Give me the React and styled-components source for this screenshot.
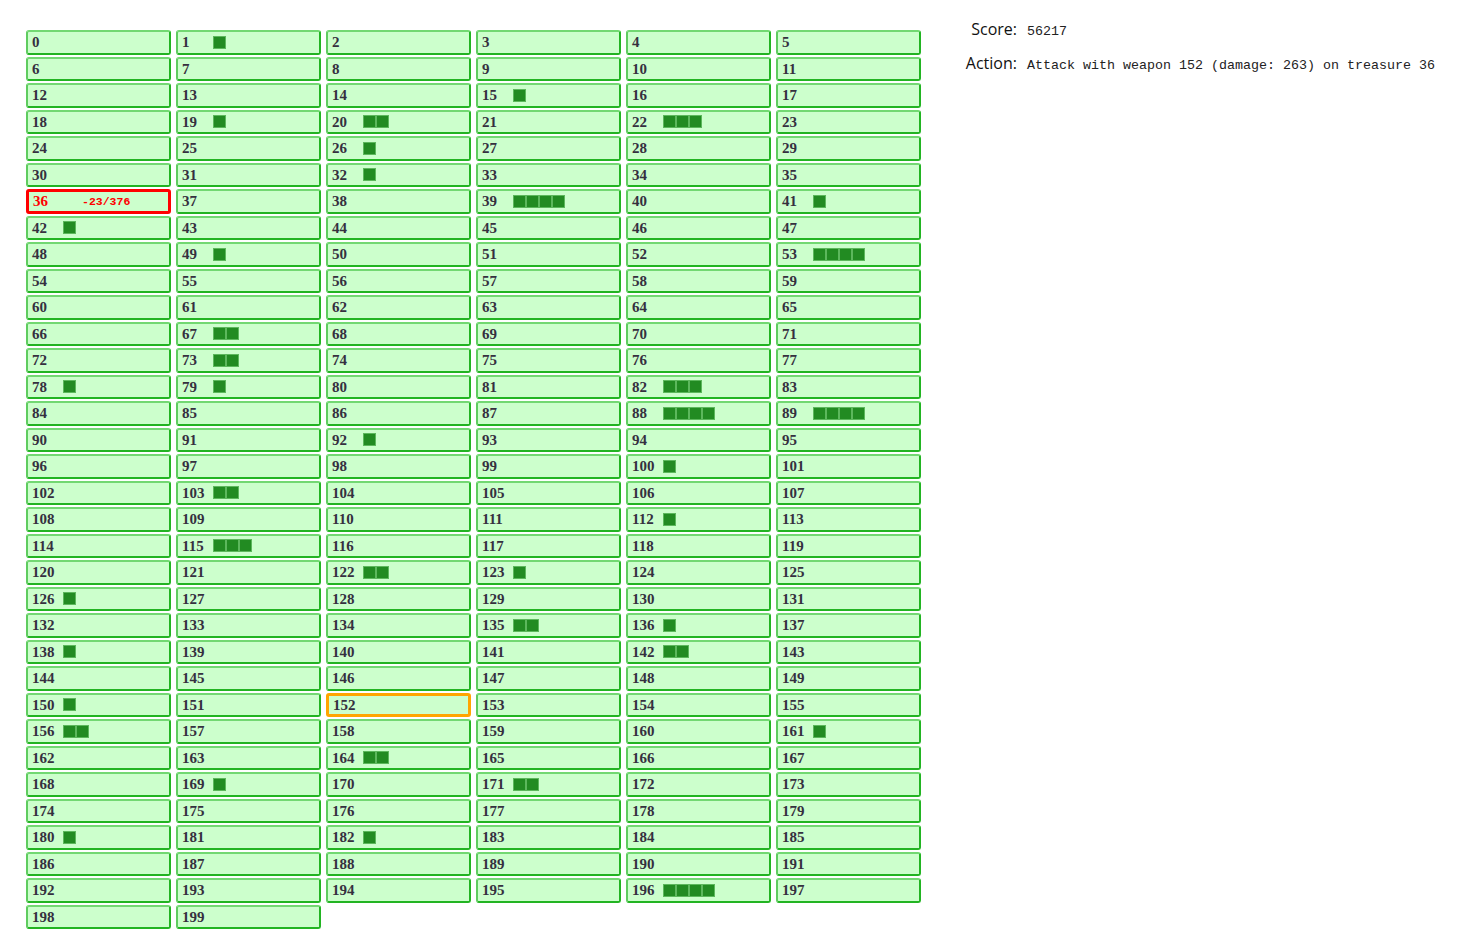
import React from "react";
import styled, { createGlobalStyle, css } from "styled-components";

const GlobalStyle = createGlobalStyle`
  html, body { margin: 0; padding: 0; background: #ffffff; }
  body { font-family: "Liberation Mono", monospace; }
`;

const Page = styled.div`
  display: flex;
  align-items: flex-start;
  padding: 30px 0 0 26px;
`;

const Grid = styled.div`
  display: grid;
  grid-template-columns: repeat(6, 145px);
  grid-auto-rows: 24.5px;
  column-gap: 5px;
  row-gap: 2px;
`;

const Cell = styled.div`
  box-sizing: border-box;
  display: flex;
  align-items: center;
  padding-left: 4px;
  background: #ccffcc;
  border: 2px solid #22b422;
  border-top-color: #72d872;
  border-left-color: #5fcc5f;
  border-radius: 3px;
  color: #35303f;
  ${(p) =>
    p.$state === "target" &&
    css`
      border: 3px solid #ff0000;
      color: #ff0000;
    `}
  ${(p) =>
    p.$state === "weapon" &&
    css`
      border: 3px solid #ffa500;
    `}
`;

const Num = styled.span`
  min-width: 31px;
  font-family: "Liberation Serif", serif;
  font-weight: bold;
  font-size: 15px;
  line-height: 1;
  padding-top: 1px;
`;

const Gem = styled.span`
  box-sizing: border-box;
  width: 13px;
  height: 13px;
  background: #228b22;
  border: 1px solid #5cb85c;
`;

const Damage = styled.span`
  margin-left: 18px;
  color: #ff0000;
  font-family: "Liberation Mono", monospace;
  font-weight: bold;
  font-size: 11.5px;
`;

const Info = styled.div`
  display: grid;
  grid-template-columns: 52px auto;
  column-gap: 10px;
  row-gap: 12px;
  align-items: baseline;
  margin-left: 44px;
  margin-top: -12px;
`;

const Label = styled.span`
  text-align: right;
  font-family: "Open Sans", "Noto Sans", sans-serif;
  font-size: 16px;
  color: #111;
  white-space: nowrap;
`;

const Value = styled.span`
  font-family: "Liberation Mono", monospace;
  font-size: 13.33px;
  color: #222;
  white-space: nowrap;
`;

const gems = {
  1: 1, 15: 1, 19: 1, 20: 2, 22: 3, 26: 1, 32: 1, 39: 4, 41: 1, 42: 1,
  49: 1, 53: 4, 67: 2, 73: 2, 78: 1, 79: 1, 82: 3, 88: 4, 89: 4, 92: 1,
  100: 1, 103: 2, 112: 1, 115: 3, 122: 2, 123: 1, 126: 1, 135: 2, 136: 1,
  138: 1, 142: 2, 150: 1, 156: 2, 161: 1, 164: 2, 169: 1, 171: 2, 180: 1,
  182: 1, 196: 4,
};

export default function App() {
  const cells = Array.from({ length: 200 }, (_, i) => i);
  return (
    <>
      <GlobalStyle />
      <Page>
        <Grid>
          {cells.map((i) => {
            const state = i === 36 ? "target" : i === 152 ? "weapon" : undefined;
            const count = gems[i] || 0;
            return (
              <Cell key={i} $state={state}>
                <Num>{i}</Num>
                {Array.from({ length: count }, (_, k) => (
                  <Gem key={k} />
                ))}
                {i === 36 && <Damage>-23/376</Damage>}
              </Cell>
            );
          })}
        </Grid>
        <Info>
          <Label>Score:</Label>
          <Value>56217</Value>
          <Label>Action:</Label>
          <Value>Attack with weapon 152 (damage: 263) on treasure 36</Value>
        </Info>
      </Page>
    </>
  );
}
